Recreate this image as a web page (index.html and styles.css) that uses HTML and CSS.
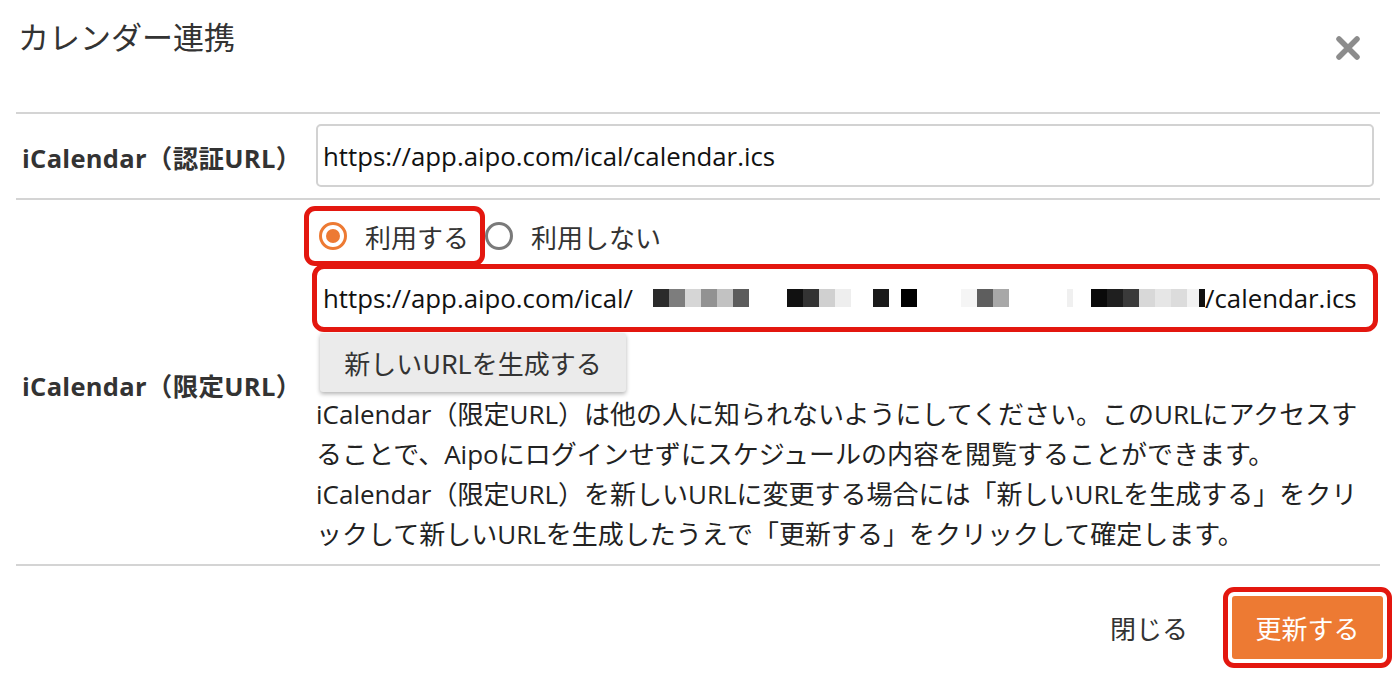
FILE: index.html
```html
<!DOCTYPE html>
<html>
	<head>
		<meta charset="UTF-8">
		<title>カレンダー連携</title>
		<link rel="stylesheet" href="styles.css">
	</head>
	<body>
		<div class="dialog">
			<div class="head">
				<h1 class="title">カレンダー連携</h1>
				<span class="close">
					<svg width="26" height="26" viewBox="0 0 26 26"><path d="M4 4L22 22M22 4L4 22" stroke="#8c8c8c" stroke-width="5.5" stroke-linecap="round"/></svg>
				</span>
			</div>

			<div class="row row1">
				<div class="label">iCalendar（認証URL）</div>
				<div class="field">
					<div class="input">https://app.aipo.com/ical/calendar.ics</div>
				</div>
			</div>

			<div class="row row2">
				<div class="label">iCalendar（限定URL）</div>
				<div class="field">
					<div class="radios">
						<label class="radio mark"><span class="dot on"></span>利用する</label>
						<label class="radio"><span class="dot"></span>利用しない</label>
					</div>
					<!-- 個人用URLはモザイク -->
					<div class="input url mark">https://app.aipo.com/ical/<span class="blur">
						<i style="width:20px"></i><i style="background:#2b2b2b"></i><i style="background:#7d7d7d"></i><i style="background:#d6d6d6"></i><i style="background:#929292"></i><i style="background:#c2c2c2"></i><i style="background:#5c5c5c"></i><i style="width:38px"></i><i style="background:#111"></i><i style="background:#333"></i><i style="background:#d0d0d0"></i><i style="background:#eee"></i><i style="width:22px"></i><i style="background:#1a1a1a"></i><i style="width:12px"></i><i style="background:#000"></i><i style="width:44px"></i><i style="background:#f5f5f5"></i><i style="background:#5e5e5e"></i><i style="background:#a8a8a8"></i><i style="width:58px"></i><i style="background:#f0f0f0;width:6px"></i><i style="width:18px"></i><i style="background:#0a0a0a"></i><i style="background:#1f1f1f"></i><i style="background:#3a3a3a"></i><i style="background:#d8d8d8"></i><i style="background:#e6e6e6"></i><i style="background:#dcdcdc"></i><i style="background:#f2f2f2;width:12px"></i><i style="background:#111;width:6px"></i>
					</span>/calendar.ics</div>
					<button class="btn-gen">新しいURLを生成する</button>
					<p class="note">iCalendar（限定URL）は他の人に知られないようにしてください。このURLにアクセスすることで、Aipoにログインせずにスケジュールの内容を閲覧することができます。<br>iCalendar（限定URL）を新しいURLに変更する場合には「新しいURLを生成する」をクリックして新しいURLを生成したうえで「更新する」をクリックして確定します。</p>
				</div>
			</div>

			<div class="foot">
				<a class="btn-close">閉じる</a>
				<span class="mark submit-wrap"><button class="btn-submit">更新する</button></span>
			</div>
		</div>
	</body>
</html>
```

FILE: styles.css
```css
*{
	margin: 0;
	padding: 0;
	box-sizing: border-box;
}
body{
	font-family: "Open Sans", "Noto Sans CJK JP", sans-serif;
	color: #333;
	background: #fff;
}

.dialog{
	padding: 0 16px;
}

.head{
	display: flex;
	justify-content: space-between;
	height: 114px;
	border-bottom: 2px solid #d4d4d4;
}
.title{
	font-family: "Noto Sans CJK JP", sans-serif;
	font-weight: normal;
	font-size: 31px;
	padding-top: 13px;
	padding-left: 2px;
	color: #333;
}
.close{
	padding-top: 35px;
	padding-right: 19px;
}

.row{
	display: flex;
	border-bottom: 2px solid #d4d4d4;
}
.label{
	width: 300px;
	flex-shrink: 0;
	display: flex;
	align-items: center;
	padding-left: 6px;
	font-size: 25.5px;
	letter-spacing: 0.3px;
	font-weight: bold;
	color: #333;
}
.field{
	flex: 1;
	padding-right: 6px;
}
.row1{
	height: 86px;
}
.row1 .field{
	padding-top: 10px;
}
.input{
	height: 63px;
	border: 2px solid #d2d2d2;
	border-radius: 5px;
	padding-left: 5px;
	display: flex;
	align-items: center;
	font-size: 25.8px;
	color: #111;
	white-space: nowrap;
	overflow: hidden;
}

.row2{
	height: 366px;
}
.row2 .label{
	padding-top: 4px;
}
.radios{
	display: flex;
	align-items: center;
	margin-top: 10px;
	margin-left: -8px;
	height: 52px;
}
.radio{
	display: flex;
	align-items: center;
	font-family: "Noto Sans CJK JP", sans-serif;
	font-size: 26px;
	padding: 0 12px 0 11px;
	height: 52px;
}
.radio + .radio{
	padding-left: 4px;
}
.dot{
	width: 28px;
	height: 28px;
	border-radius: 50%;
	border: 3px solid #7a7a7a;
	margin-right: 18px;
	position: relative;
}
.dot.on{
	border-color: #ed7a33;
}
.dot.on:after{
	content: '';
	position: absolute;
	left: 4px;
	top: 4px;
	width: 14px;
	height: 14px;
	border-radius: 50%;
	background: #ed7a33;
}

.mark{
	outline: 5px solid #e3170f;
	outline-offset: -1px;
	border-radius: 7px;
}
.url{
	margin-top: 6px;
	height: 60px;
	border-color: transparent;
	padding-left: 5px;
	border-radius: 8px;
}
.blur{
	display: inline-flex;
	height: 18px;
}
.blur i{
	display: block;
	width: 16px;
	height: 18px;
}

.btn-gen{
	display: block;
	margin-top: 5px;
	margin-left: 4px;
	width: 306px;
	height: 59px;
	border: none;
	border-radius: 3px;
	background: #ebebeb;
	box-shadow: 0 2px 4px rgba(0,0,0,.3);
	font-family: "Noto Sans CJK JP", sans-serif;
	font-size: 26px;
	color: #333;
}

.note{
	margin-top: 2px;
	font-family: "Open Sans", "Noto Sans CJK JP", sans-serif;
	font-size: 26px;
	line-height: 40px;
	color: #222;
}

.foot{
	display: flex;
	justify-content: flex-end;
	align-items: center;
	height: 114px;
	padding-top: 8px;
}
.btn-close{
	font-family: "Noto Sans CJK JP", sans-serif;
	font-size: 26px;
	color: #333;
	margin-right: 39px;
}
.submit-wrap{
	display: block;
	padding: 5px;
	margin-right: -8px;
}
.btn-submit{
	display: block;
	width: 151px;
	height: 63px;
	border: none;
	border-radius: 3px;
	background: #ed7a33;
	color: #fff;
	font-family: "Noto Sans CJK JP", sans-serif;
	font-size: 26px;
}
```
